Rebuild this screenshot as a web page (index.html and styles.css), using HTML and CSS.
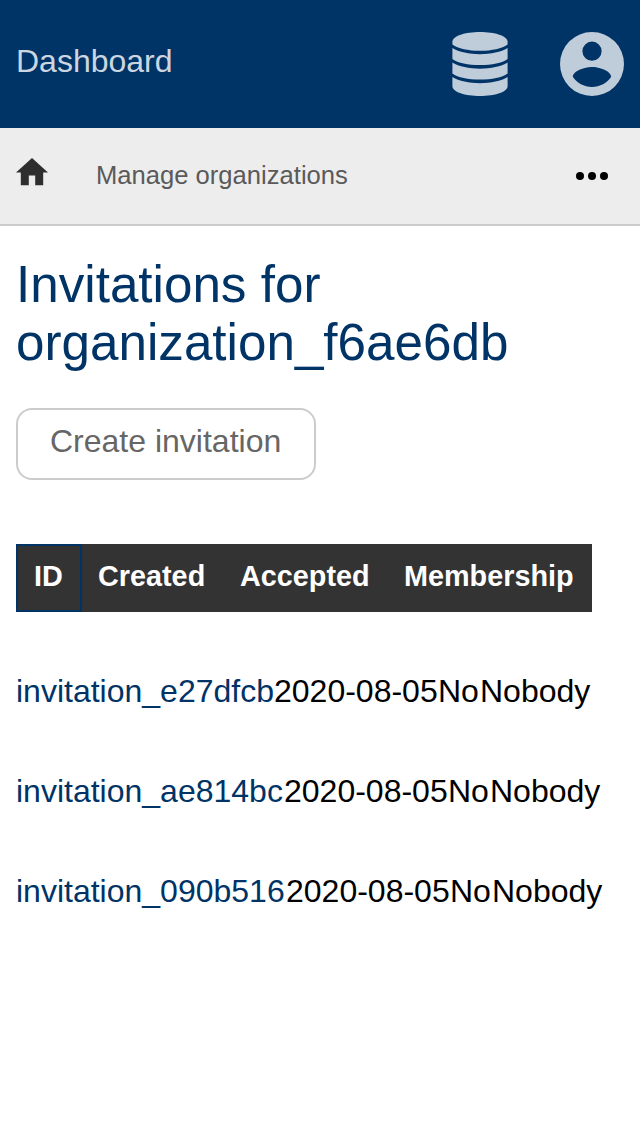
FILE: index.html
```html
<!DOCTYPE html>
<html lang="en">
<head>
<meta charset="utf-8">
<title>Invitations</title>
<link rel="stylesheet" href="styles.css">
</head>
<body>
<header class="topbar">
  <a class="brand">Dashboard</a>
  <nav class="tools">
    <svg class="database" viewBox="0 0 56 64">
      <path d="M.4 9.500C1 4 13 0 28 0s27 4 27.600 9.500v3C50 16.500 40 18.800 28 18.800S6 16.500.4 12.500z"/>
      <path d="M.4 16C7 20 17 22.200 28 22.200S49 20 55.600 16v11C50 31 40 33.100 28 33.100S6 31 .4 27z"/>
      <path d="M.4 30.500C7 34.500 17 36.700 28 36.700s21-2.200 27.600-6.200v11C50 45.500 40 47.600 28 47.600S6 45.500.4 41.500z"/>
      <path d="M.4 45C7 49 17 51.200 28 51.200S49 49 55.600 45v9.500C55 60 43 64 28 64S1 60 .4 54.500z"/>
    </svg>
    <svg class="account" viewBox="2 2 20 20"><path d="M12 19.200C9.500 19.200 7.290 17.920 6 16c.03-2 4-3.100 6-3.100s5.970 1.100 6 3.100c-1.290 1.920-3.500 3.200-6 3.200M12 5a3 3 0 1 1 0 6 3 3 0 0 1 0-6m0-3a10 10 0 1 0 0 20 10 10 0 0 0 0-20z"/></svg>
  </nav>
</header>
<nav class="crumbs">
  <svg class="home" viewBox="2 3 20 17"><path d="M10 20v-6h4v6h5v-8h3L12 3 2 12h3v8z"/></svg>
  <a class="crumb">Manage organizations</a>
  <svg class="more" viewBox="0 0 32 8"><circle cx="4" cy="4" r="4"/><circle cx="16" cy="4" r="4"/><circle cx="28" cy="4" r="4"/></svg>
</nav>
<main class="content">
  <h1 class="title">Invitations for organization_f6ae6db</h1>
  <a class="button">Create invitation</a>
  <div class="table">
    <div class="head"><span class="cell active">ID</span><span class="cell">Created</span><span class="cell">Accepted</span><span class="cell">Membership</span></div>
    <div class="row first"><a class="link">invitation_e27dfcb</a><span>2020-08-05</span><span>No</span><span>Nobody</span></div>
    <div class="row second"><a class="link">invitation_ae814bc</a><span>2020-08-05</span><span>No</span><span>Nobody</span></div>
    <div class="row third"><a class="link">invitation_090b516</a><span>2020-08-05</span><span>No</span><span>Nobody</span></div>
  </div>
</main>
</body>
</html>
```
FILE: styles.css
```css
* { box-sizing: border-box; }
body {
  margin: 0;
  background: #fff;
  color: #000;
  font: 32px/36px "Liberation Sans", Arial, sans-serif;
}
svg { display: block; flex: none; }
.topbar {
  display: flex;
  justify-content: space-between;
  height: 128px;
  padding: 32px 16px;
  background: #003366;
}
.brand { padding-top: 11px; color: #ccd6e0; }
.tools { display: flex; gap: 52px; fill: #bfccd9; }
.database { width: 56px; height: 64px; }
.account { width: 64px; height: 64px; }
.crumbs {
  display: flex;
  align-items: center;
  height: 98px;
  padding: 0 32px 0 16px;
  background: #ededed;
  border-bottom: 2px solid #ccc;
}
.home { width: 32px; height: 27.2px; margin-bottom: 8px; fill: #2e2e2e; }
.crumb { margin-left: 48px; margin-bottom: 2px; color: #5a5a5a; font-size: 25.6px; }
.more { width: 32px; height: 8px; margin-left: auto; }
.content { padding: 30px 16px; }
.title { margin: 0 0 36px; color: #003366; font-size: 51.2px; font-weight: 400; line-height: 58px; }
.button {
  display: block;
  width: 300px;
  height: 72px;
  padding: 13px 0 0 32px;
  border: 2px solid #ccc;
  border-radius: 16px;
  color: #666;
}
.table { margin-top: 64px; }
.head {
  display: grid;
  grid-template-columns: 66px 142px 164px 1fr;
  width: 576px;
  height: 68px;
  background: #333;
  color: #fff;
  font-size: 28.8px;
  font-weight: 700;
}
.cell { padding: 14px 0 0 16px; }
.active { padding-top: 12px; border: 2px solid #003366; }
.row { display: grid; height: 36px; margin-top: 64px; }
.first { grid-template-columns: 258px 164px 42px 1fr; margin-top: 61px; }
.second { grid-template-columns: 268px 164px 42px 1fr; }
.third { grid-template-columns: 270px 164px 42px 1fr; }
.link { color: #003366; }
```
